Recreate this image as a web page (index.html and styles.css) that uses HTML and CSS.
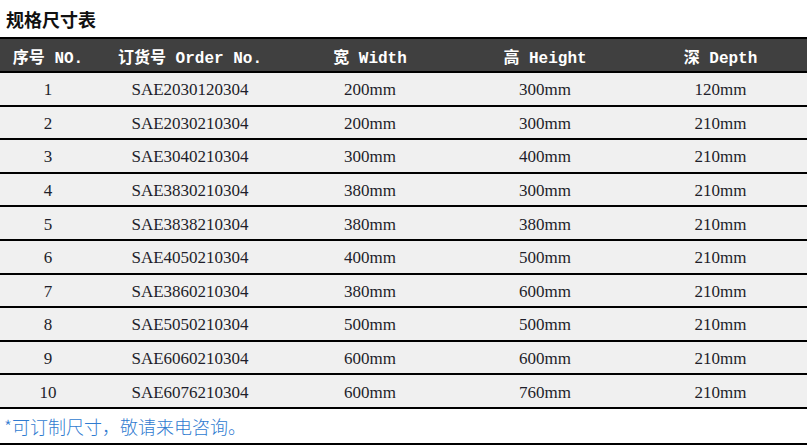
FILE: index.html
```html
<!DOCTYPE html>
<html lang="zh">
<head>
<meta charset="utf-8">
<title>规格尺寸表</title>
<link rel="stylesheet" href="styles.css">
</head>
<body>
<div class="page">
  <h1 class="title">规格尺寸表</h1>
  <table class="spec">
    <colgroup>
      <col class="c1"><col class="c2"><col class="c3"><col class="c4"><col class="c5">
    </colgroup>
    <thead>
      <tr><th>序号 NO.</th><th>订货号 Order No.</th><th>宽 Width</th><th>高 Height</th><th>深 Depth</th></tr>
    </thead>
    <tbody>
      <tr><td>1</td><td>SAE2030120304</td><td>200mm</td><td>300mm</td><td>120mm</td></tr>
      <tr><td>2</td><td>SAE2030210304</td><td>200mm</td><td>300mm</td><td>210mm</td></tr>
      <tr><td>3</td><td>SAE3040210304</td><td>300mm</td><td>400mm</td><td>210mm</td></tr>
      <tr><td>4</td><td>SAE3830210304</td><td>380mm</td><td>300mm</td><td>210mm</td></tr>
      <tr><td>5</td><td>SAE3838210304</td><td>380mm</td><td>380mm</td><td>210mm</td></tr>
      <tr><td>6</td><td>SAE4050210304</td><td>400mm</td><td>500mm</td><td>210mm</td></tr>
      <tr><td>7</td><td>SAE3860210304</td><td>380mm</td><td>600mm</td><td>210mm</td></tr>
      <tr><td>8</td><td>SAE5050210304</td><td>500mm</td><td>500mm</td><td>210mm</td></tr>
      <tr><td>9</td><td>SAE6060210304</td><td>600mm</td><td>600mm</td><td>210mm</td></tr>
      <tr><td>10</td><td>SAE6076210304</td><td>600mm</td><td>760mm</td><td>210mm</td></tr>
    </tbody>
  </table>
  <p class="note">*可订制尺寸，敬请来电咨询。</p>
</div>
</body>
</html>
```
FILE: styles.css
```css
html, body {
  margin: 0;
  padding: 0;
  background: #ffffff;
}
.page {
  width: 807px;
}
.title {
  margin: 0;
  height: 37px;
  padding-left: 6px;
  display: flex;
  align-items: center;
  font-family: "Noto Sans CJK SC", sans-serif;
  font-weight: 700;
  font-size: 18px;
  color: #111;
}
.spec {
  width: 807px;
  border-collapse: collapse;
  table-layout: fixed;
}
.c1 { width: 96px; }
.c2 { width: 188px; }
.c3 { width: 172px; }
.c4 { width: 178px; }
.c5 { width: 173px; }
.spec thead tr {
  background: #404040;
  border-top: 2px solid #000;
  border-bottom: 2px solid #000;
}
.spec th {
  height: 31px;
  padding: 1px 0 0;
  color: #ffffff;
  font-family: "Liberation Mono", "Noto Sans CJK SC", monospace;
  font-weight: 700;
  font-size: 16px;
  text-align: center;
  white-space: nowrap;
}
.spec tbody tr {
  background: #f0f0f0;
  border-bottom: 2px solid #000;
}
.spec td {
  height: 28.6px;
  padding: 3px 0 0;
  text-align: center;
  font-family: "Liberation Serif", serif;
  font-size: 17px;
  color: #1e1e2a;
}
.note {
  margin: 0;
  height: 34px;
  display: flex;
  align-items: center;
  padding-left: 4px;
  border-bottom: 2px solid #000;
  font-family: "Noto Sans CJK SC", sans-serif;
  font-weight: 300;
  font-size: 18px;
  color: #2f7bd0;
}
```
